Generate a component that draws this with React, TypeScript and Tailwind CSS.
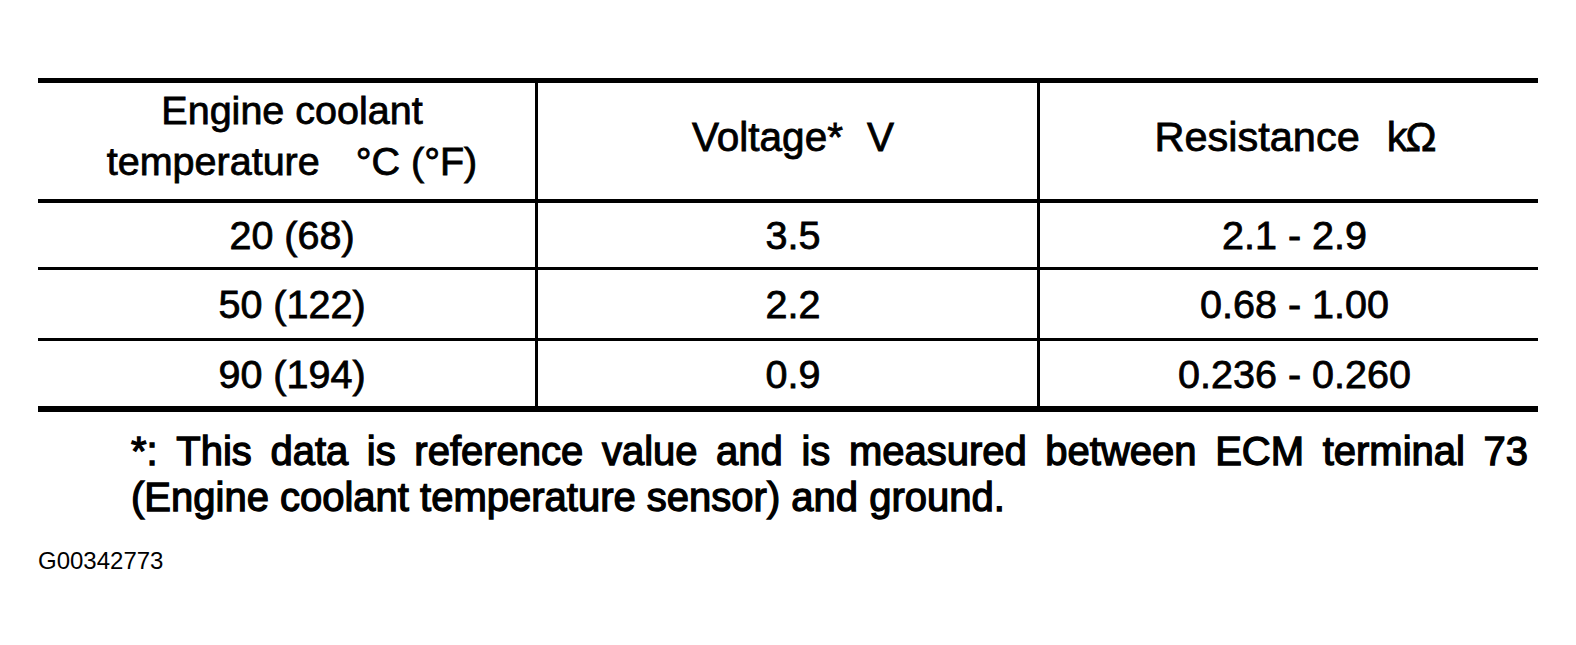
import React from "react";

const rows = [
  { t: "20 (68)", v: "3.5", r: "2.1 - 2.9", h: "h-[68px]" },
  { t: "50 (122)", v: "2.2", r: "0.68 - 1.00", h: "h-[71px]" },
  { t: "90 (194)", v: "0.9", r: "0.236 - 0.260", h: "h-[68px]" },
];

export default function App() {
  return (
    <div className="w-[1576px] h-[645px] bg-white text-black font-['Liberation_Sans',Arial,sans-serif] overflow-hidden pt-[78px]">
      <div className="ml-[38px] w-[1500px] border-t-[5px] border-b-[6px] border-black text-[39.5px] [-webkit-text-stroke:0.8px_black]">
        <div className="grid grid-cols-[497px_502px_501px] h-[116px]">
          <div className="flex flex-col items-center justify-center pl-[11px] pb-[11px] leading-[51px]">
            <div>Engine coolant</div>
            <div className="whitespace-nowrap">
              temperature<span className="ml-[36px]">°C (°F)</span>
            </div>
          </div>
          <div className="flex items-center justify-center border-l-[3px] border-black pl-[11px] pb-[9px] text-[40.5px] leading-[50px] whitespace-nowrap">
            Voltage*<span className="ml-[24px]">V</span>
          </div>
          <div className="flex items-center justify-center border-l-[3px] border-black pl-[11px] pb-[9px] text-[41.5px] leading-[50px] whitespace-nowrap">
            Resistance<span className="ml-[27px] tracking-[-2px]">kΩ</span>
          </div>
        </div>
        {rows.map((row, i) => (
          <div
            key={i}
            className={`grid grid-cols-[497px_502px_501px] border-black ${row.h} ${
              i === 0 ? "border-t-[4px]" : "border-t-[3px]"
            }`}
          >
            <div className="flex items-center justify-center pl-[11px] leading-[46px]">{row.t}</div>
            <div className="flex items-center justify-center border-l-[3px] border-black pl-[11px] leading-[46px]">
              {row.v}
            </div>
            <div className="flex items-center justify-center border-l-[3px] border-black pl-[11px] leading-[46px]">
              {row.r}
            </div>
          </div>
        ))}
      </div>
      <div className="mt-[16px] ml-[131px] w-[1397px] text-[40px] leading-[46px] [-webkit-text-stroke:1.3px_black]">
        <div className="whitespace-nowrap flex justify-between">
          {"*: This data is reference value and is measured between ECM terminal 73".split(" ").map((w, i) => (
            <span key={i}>{w}</span>
          ))}
        </div>
        <div className="whitespace-nowrap">(Engine coolant temperature sensor) and ground.</div>
      </div>
      <div className="mt-[29px] ml-[38px] text-[24px] leading-[24px]">G00342773</div>
    </div>
  );
}
